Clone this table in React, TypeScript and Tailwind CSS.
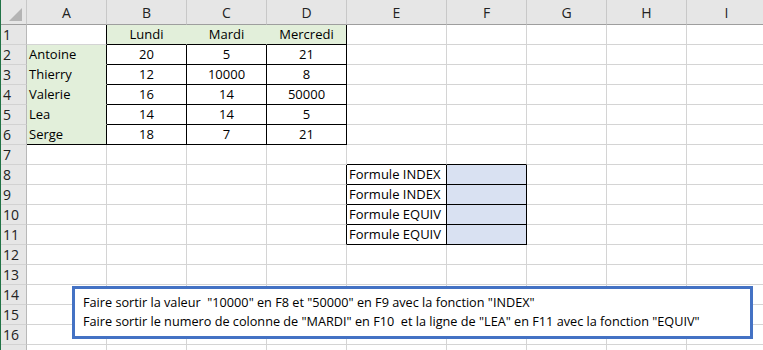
import React from 'react';

const COLS = ['A', 'B', 'C', 'D', 'E', 'F', 'G', 'H', 'I'];
const ROWS = Array.from({ length: 17 }, (_, i) => i + 1);

const GREEN = 'bg-[#e2efda]';
const BLUE = 'bg-[#d9e1f2]';

type Cell = { text?: string; align?: 'left' | 'center'; bg?: string; r?: string; b?: string };

const week = [
  ['Antoine', '20', '5', '21'],
  ['Thierry', '12', '10000', '8'],
  ['Valerie', '16', '14', '50000'],
  ['Lea', '14', '14', '5'],
  ['Serge', '18', '7', '21'],
];

// border classes: grid lines are light grey, the tables use black
function cellAt(col: string, row: number): Cell {
  const c: Cell = { r: 'border-r-[#d4d4d4]', b: 'border-b-[#d4d4d4]' };
  const ci = COLS.indexOf(col);

  if (row === 1) {
    if (col === 'A') c.r = 'border-r-black';
    if (ci >= 1 && ci <= 3) {
      c.bg = GREEN;
      c.align = 'center';
      c.text = ['Lundi', 'Mardi', 'Mercredi'][ci - 1];
      c.b = 'border-b-black';
      c.r = ci === 3 ? 'border-r-black' : 'border-r-[#e2efda]';
    }
  }

  if (row >= 2 && row <= 6) {
    const line = week[row - 2];
    if (col === 'A') {
      c.bg = GREEN;
      c.text = line[0];
      c.align = 'left';
      c.r = 'border-r-black';
      c.b = row === 6 ? 'border-b-black' : 'border-b-[#e2efda]';
    }
    if (ci >= 1 && ci <= 3) {
      c.text = line[ci];
      c.align = 'center';
      c.r = 'border-r-black';
      c.b = 'border-b-black';
    }
  }

  if (row === 7 && (col === 'E' || col === 'F')) c.b = 'border-b-black';
  if (row >= 8 && row <= 11) {
    if (col === 'D') c.r = 'border-r-black';
    if (col === 'E') {
      c.text = row < 10 ? 'Formule INDEX' : 'Formule EQUIV';
      c.align = 'left';
      c.r = 'border-r-black';
      c.b = 'border-b-black';
    }
    if (col === 'F') {
      c.bg = BLUE;
      c.r = 'border-r-black';
      c.b = 'border-b-black';
    }
  }
  return c;
}

function ColHeader({ label }: { label: string }) {
  return (
    <div className="h-[25px] flex items-center justify-center bg-[#e6e6e6] border-r border-r-[#c8c8c8] border-b border-b-[#9e9e9e] text-[#222] text-[14px] pt-[1px]">
      {label}
    </div>
  );
}

// the last row only peeks in at the bottom edge, so its number is left off
function RowHeader({ n }: { n: number }) {
  return (
    <div className="h-[20px] flex items-center pl-[2px] bg-[#e6e6e6] border-r border-r-[#b8b8b8] border-b border-b-[#d2d2d2] text-[#222] text-[14px]">
      {n < 17 ? n : null}
    </div>
  );
}

function Corner() {
  return (
    <div className="h-[25px] relative bg-[#e6e6e6] border-r border-r-[#c8c8c8] border-b border-b-[#9e9e9e]">
      <svg className="absolute right-[4px] bottom-[3px]" width="13" height="13" viewBox="0 0 13 13">
        <polygon points="13,0 13,13 0,13" fill="#b4b4b4" />
      </svg>
    </div>
  );
}

export default function App() {
  return (
    <div
      className="w-[763px] h-[350px] overflow-hidden relative bg-white border-l border-l-[#217346] text-[13px] leading-none"
      style={{ fontFamily: '"Open Sans", "Liberation Sans", sans-serif' }}
    >
      <div className="grid grid-cols-[26px_80px_80px_80px_80px_100px_80px_80px_80px_80px] w-[766px]">
        <Corner />
        {COLS.map((c) => (
          <ColHeader key={c} label={c} />
        ))}
        {ROWS.map((row) => (
          <React.Fragment key={row}>
            <RowHeader n={row} />
            {COLS.map((col) => {
              const c = cellAt(col, row);
              return (
                <div
                  key={col}
                  className={`h-[20px] flex items-center border-r border-b whitespace-nowrap overflow-visible text-black ${c.r} ${c.b} ${c.bg ?? 'bg-white'} ${
                    c.align === 'center' ? 'justify-center' : 'justify-start pl-[2px]'
                  }`}
                >
                  {c.text}
                </div>
              );
            })}
          </React.Fragment>
        ))}
      </div>

      {/* note box floating over rows 14-16 */}
      <div className="absolute left-[71px] top-[286px] w-[681px] h-[53px] border-[3px] border-[#4472c4] bg-white pl-[8px] pt-[4px] text-black text-[12.7px] leading-[19px]">
        <div className="whitespace-pre">{'Faire sortir la valeur  "10000" en F8 et "50000" en F9 avec la fonction "INDEX"'}</div>
        <div className="whitespace-pre">{'Faire sortir le numero de colonne de "MARDI" en F10  et la ligne de "LEA" en F11 avec la fonction "EQUIV"'}</div>
      </div>
    </div>
  );
}
